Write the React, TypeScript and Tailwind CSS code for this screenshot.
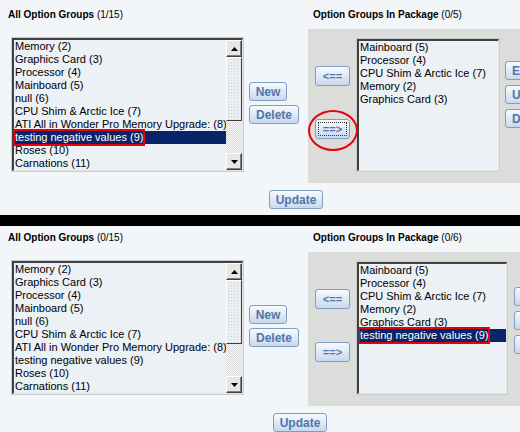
import React from "react";

type ListProps = {
  items: string[];
  selected?: number;
  marked?: boolean;
  scroll?: boolean;
  className: string;
};

const leftItems = [
  "Memory (2)",
  "Graphics Card (3)",
  "Processor (4)",
  "Mainboard (5)",
  "null (6)",
  "CPU Shim & Arctic Ice (7)",
  "ATI All in Wonder Pro Memory Upgrade: (8)",
  "testing negative values (9)",
  "Roses (10)",
  "Carnations (11)",
];

const pkgItems = [
  "Mainboard (5)",
  "Processor (4)",
  "CPU Shim & Arctic Ice (7)",
  "Memory (2)",
  "Graphics Card (3)",
];

const Arrow = ({ down }: { down?: boolean }) => (
  <svg width="7" height="4" viewBox="0 0 7 4">
    <path d={down ? "M0 0h7L3.5 4z" : "M3.5 0L7 4H0z"} fill="#000" />
  </svg>
);

const ScrollBtn = ({ down }: { down?: boolean }) => (
  <div className="flex h-[17px] w-[16px] shrink-0 items-center justify-center border border-t-white border-l-white border-r-[#404040] border-b-[#404040] bg-[#e6e6e2] shadow-[inset_-1px_-1px_0_#808080]">
    <Arrow down={down} />
  </div>
);

const ListBox = ({ items, selected, marked, scroll, className }: ListProps) => (
  <div className={`shrink-0 border border-[#c9cdd2] ${className}`}>
    <div className="flex h-full border-t-2 border-l-2 border-r border-b border-t-[#404040] border-l-[#404040] border-r-[#e4e4e4] border-b-[#e4e4e4] bg-[#ebf1f5]">
      <div className="flex-1 overflow-hidden">
        {items.map((it, i) => (
          <div
            key={i}
            className={`h-[13px] whitespace-nowrap pl-[1px] text-[11px] leading-[13px] ${
              i === selected ? "bg-[#0a246a] text-white" : "text-black"
            }`}
          >
            {i === selected && marked ? (
              <span className="inline-block outline-2 outline-offset-0 outline-[#e8000b]">{it}</span>
            ) : (
              it
            )}
          </div>
        ))}
      </div>
      {scroll && (
        <div className="flex w-[16px] flex-col bg-[repeating-conic-gradient(#dcdcdc_0_25%,#f6f6f6_0_50%)] bg-[length:2px_2px]">
          <ScrollBtn />
          <div className="h-[64px] border border-t-white border-l-white border-r-[#404040] border-b-[#404040] bg-[radial-gradient(#c8d0d8_0.6px,#eceff2_0.8px)] bg-[length:3px_3px]" />
          <div className="flex-1" />
          <ScrollBtn down />
        </div>
      )}
    </div>
  </div>
);

const Btn = ({ label, className = "" }: { label: string; className?: string }) => (
  <div
    className={`flex h-[19px] shrink-0 items-center justify-center rounded-[3px] border border-[#7d9ec0] bg-gradient-to-b from-[#f7fafd] to-[#c8d9ee] px-[6px] text-[12px] font-bold text-[#5176aa] ${className}`}
  >
    {label}
  </div>
);

const ArrowBtn = ({ label, focus }: { label: string; focus?: boolean }) => (
  <div className="flex h-[20px] w-[35px] items-center justify-center rounded-[3px] border border-[#7d9ec0] bg-gradient-to-b from-[#f7fafd] to-[#c8d9ee] p-[2px] text-[11px] font-bold text-[#5176aa]">
    <div
      className={`flex h-full w-full items-center justify-center ${
        focus ? "border border-dotted border-[#333]" : ""
      }`}
    >
      {label}
    </div>
  </div>
);

type PanelProps = {
  count: string;
  pkgCount: string;
  leftSel?: number;
  pkg: string[];
  pkgSel?: number;
  circle?: boolean;
  wide?: boolean;
};

const Panel = ({ count, pkgCount, leftSel, pkg, pkgSel, circle, wide }: PanelProps) => (
  <div className="h-[215px]">
    <div className="flex h-[183px]">
      <div className="w-[248px] shrink-0 pl-[8px] pt-[9px]">
        <div className="h-[12px] text-[10px] leading-[12px] text-black">
          <span className="font-bold">All Option Groups</span> {count}
        </div>
        <ListBox
          items={leftItems}
          selected={leftSel}
          marked
          scroll
          className="ml-[3px] mt-[16px] h-[135px] w-[233px]"
        />
      </div>
      <div className="flex w-[60px] shrink-0 flex-col items-start gap-[4px] pl-[1px] pt-[82px]">
        <Btn label="New" className="w-[38px]" />
        <Btn label="Delete" className="w-[50px]" />
      </div>
      <div className="flex shrink-0 flex-col">
        <div className="h-[29px] pl-[5px] pt-[9px] text-[10px] leading-[12px] text-black">
          <span className="font-bold">Option Groups In Package</span> {pkgCount}
        </div>
        <div className="flex h-[154px] w-[230px] bg-[#dcdcda]">
          <div className="flex w-[48px] shrink-0 flex-col pl-[7px] pt-[37px]">
            <ArrowBtn label="<==" />
            <div className="relative mt-[33px]">
              <ArrowBtn label="==>" focus={circle} />
              {circle && (
                <span className="absolute left-[-7px] top-[-9px] h-[41px] w-[50px] rounded-[50%] border-2 border-[#e8000b]" />
              )}
            </div>
          </div>
          <ListBox
            items={pkg}
            selected={pkgSel}
            marked
            className={`mt-[9px] h-[134px] ${wide ? "w-[152px]" : "w-[144px]"}`}
          />
          <div
            className={`flex shrink-0 flex-col gap-[5px] ${wide ? "ml-[6px] pt-[35px]" : "ml-[5px] pt-[32px]"}`}
          >
            <Btn label="Edit" className="w-[40px] justify-start" />
            <Btn label="Up" className="w-[40px] justify-start" />
            <Btn label="Down" className="w-[40px] justify-start" />
          </div>
        </div>
      </div>
    </div>
    <div className={`mt-[7px] ${wide ? "pl-[273px]" : "pl-[269px]"}`}>
      <Btn label="Update" className="w-[54px]" />
    </div>
  </div>
);

export default function App() {
  return (
    <div className="h-[432px] w-[520px] overflow-hidden bg-[#f3f6f9] font-['Liberation_Sans',Arial,sans-serif]">
      <Panel count="(1/15)" pkgCount="(0/5)" leftSel={7} pkg={pkgItems} circle />
      <div className="h-[11px] bg-black" />
      <div className="-mt-[3px]">
        <Panel
          count="(0/15)"
          pkgCount="(0/6)"
          pkg={[...pkgItems, "testing negative values (9)"]}
          pkgSel={5}
          wide
        />
      </div>
    </div>
  );
}
